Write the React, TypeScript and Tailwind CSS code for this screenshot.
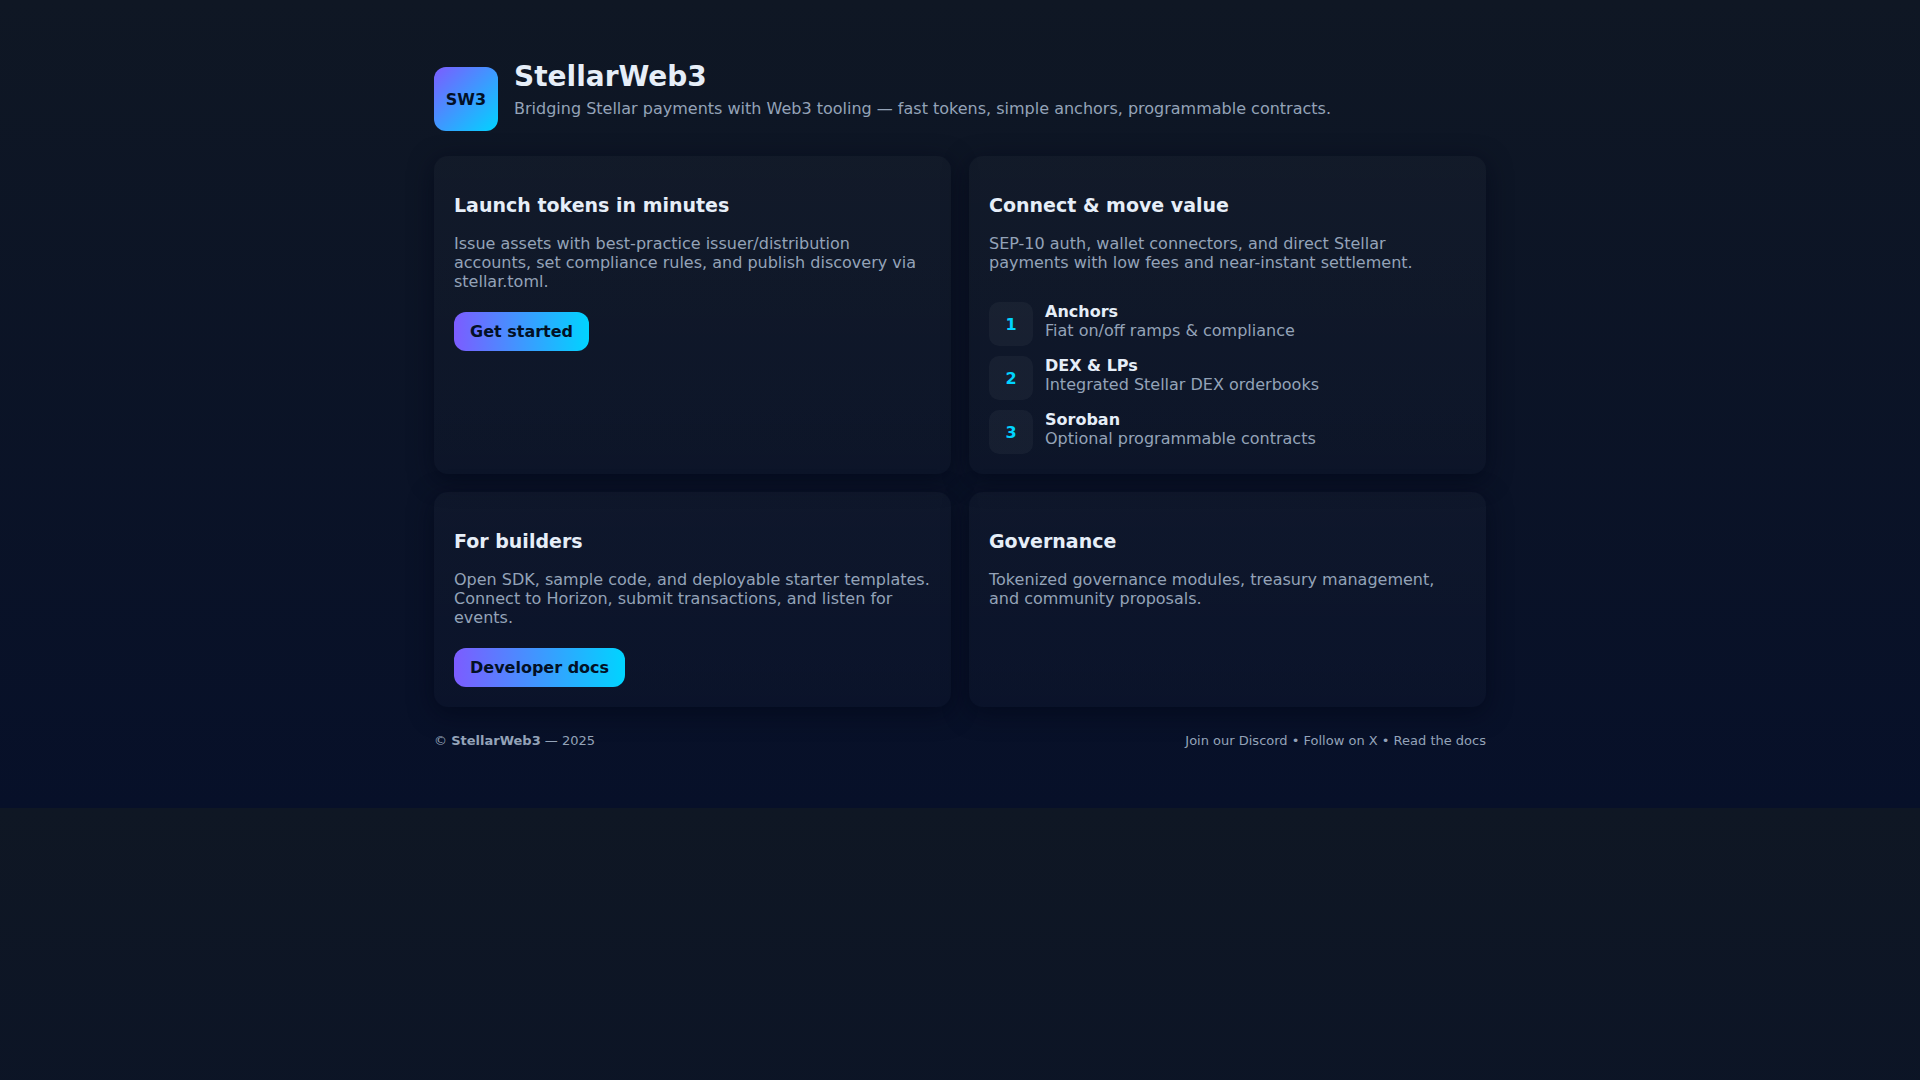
interface Feature {
  title: string;
  detail: string;
}

interface CardProps {
  title: string;
  text: string;
  children?: React.ReactNode;
}

const features: Feature[] = [
  { title: "Anchors", detail: "Fiat on/off ramps & compliance" },
  { title: "DEX & LPs", detail: "Integrated Stellar DEX orderbooks" },
  { title: "Soroban", detail: "Optional programmable contracts" },
];

function Card({ title, text, children }: CardProps) {
  return (
    <section className="rounded-[14px] bg-linear-to-b from-white/2 to-white/1 p-5 shadow-[0_6px_24px_rgba(2,6,23,0.6)]">
      <h3 className="mt-[18px] mb-[17px] text-[19px] leading-[23px] font-bold">{title}</h3>
      <p className="text-[#94a3b8]">{text}</p>
      {children}
    </section>
  );
}

function CtaLink({ href, label }: { href: string; label: string }) {
  return (
    <a
      href={href}
      className="mt-[21px] block w-fit rounded-xl bg-linear-to-r/srgb from-[#7c5cff] to-[#00d4ff] px-4 py-2.5 font-bold text-[#021025]"
    >
      {label}
    </a>
  );
}

export default function App() {
  return (
    <div className="min-h-screen bg-[linear-gradient(180deg,#0f1724_0%,#071029_100%)] bg-[length:100%_808px] bg-repeat-y font-['DejaVu_Sans',sans-serif] text-base leading-[19px] text-[#e6eef8]">
      <div className="mx-auto max-w-[1100px] px-6 py-[60px]">
        <header className="mb-[25px] flex gap-4">
          <div className="mt-[7px] flex size-16 shrink-0 items-center justify-center rounded-xl bg-linear-135/srgb from-[#7c5cff] to-[#00d4ff] font-bold text-[#021025]">
            SW3
          </div>
          <div>
            <h1 className="mb-1.5 text-[28px] leading-[33px] font-bold">StellarWeb3</h1>
            <p className="text-[#94a3b8]">
              Bridging Stellar payments with Web3 tooling — fast tokens, simple anchors, programmable contracts.
            </p>
          </div>
        </header>

        <main className="grid grid-cols-1 gap-[18px] md:grid-cols-2">
          <Card
            title="Launch tokens in minutes"
            text="Issue assets with best-practice issuer/distribution accounts, set compliance rules, and publish discovery via stellar.toml."
          >
            <CtaLink href="#start" label="Get started" />
          </Card>

          <Card
            title="Connect & move value"
            text="SEP-10 auth, wallet connectors, and direct Stellar payments with low fees and near-instant settlement."
          >
            <ol className="mt-[30px] flex flex-col gap-2.5">
              {features.map((feature, i) => (
                <li key={feature.title} className="flex gap-3">
                  <span className="flex size-11 shrink-0 items-center justify-center rounded-[10px] bg-white/4 font-bold text-[#00d4ff]">
                    {i + 1}
                  </span>
                  <div>
                    <div className="font-bold">{feature.title}</div>
                    <div className="text-[#94a3b8]">{feature.detail}</div>
                  </div>
                </li>
              ))}
            </ol>
          </Card>

          <Card
            title="For builders"
            text="Open SDK, sample code, and deployable starter templates. Connect to Horizon, submit transactions, and listen for events."
          >
            <CtaLink href="#docs" label="Developer docs" />
          </Card>

          <Card
            title="Governance"
            text="Tokenized governance modules, treasury management, and community proposals."
          />
        </main>

        <footer className="mt-[26px] flex flex-wrap justify-between text-[13px] leading-[15px] text-[#94a3b8]">
          <div>
            © <strong>StellarWeb3</strong> — 2025
          </div>
          <div>Join our Discord • Follow on X • Read the docs</div>
        </footer>
      </div>
    </div>
  );
}
